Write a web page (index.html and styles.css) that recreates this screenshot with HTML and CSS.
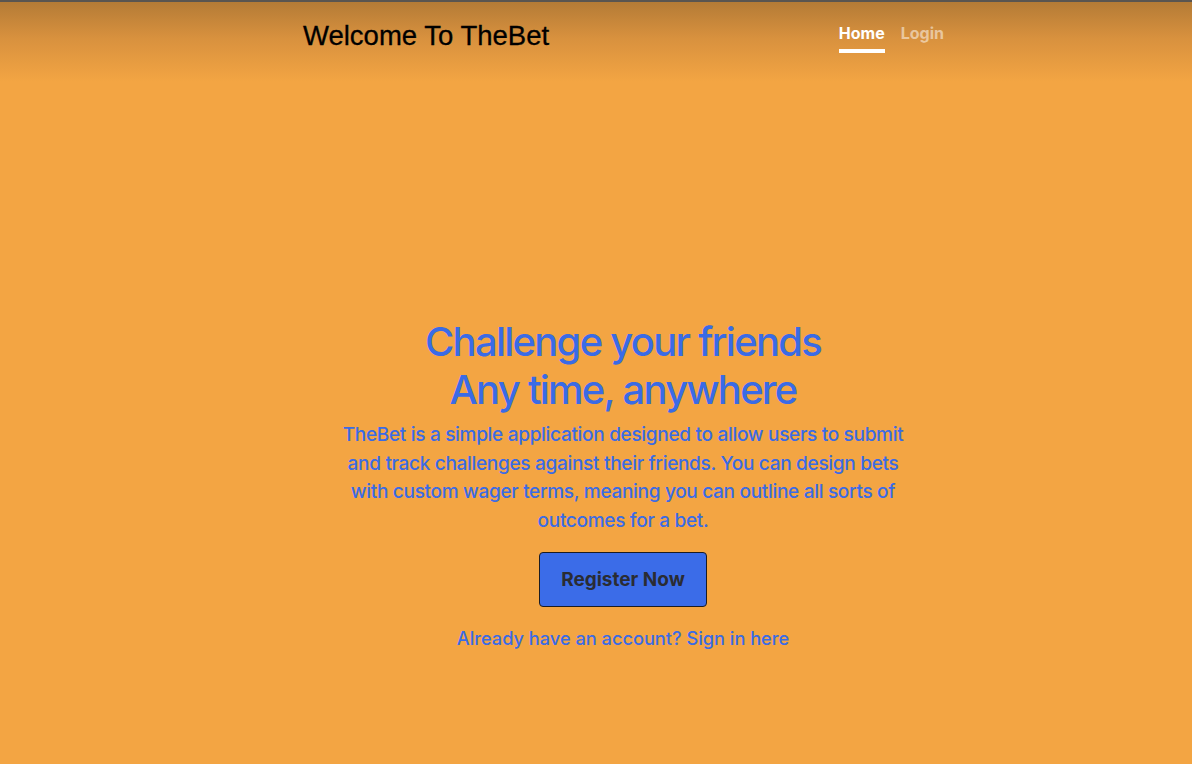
FILE: index.html
```html
<!DOCTYPE html>
<html lang="en">
<head>
<meta charset="utf-8">
<title>TheBet</title>
<link rel="stylesheet" href="styles.css">
</head>
<body>
<header class="masthead">
  <div class="container masthead-inner">
    <h3 class="brand">Welcome To TheBet</h3>
    <nav class="nav">
      <a class="nav-link active" href="#">Home</a>
      <a class="nav-link" href="#">Login</a>
    </nav>
  </div>
</header>
<main class="container hero">
  <h1 class="heading">Challenge your friends<br>Any time, anywhere</h1>
  <p class="lead">TheBet is a simple application designed to allow users to submit and track challenges against their friends. You can design bets with custom wager terms, meaning you can outline all sorts of outcomes for a bet.</p>
  <a class="btn" href="#">Register Now</a>
  <a class="signin" href="#">Already have an account? Sign in here</a>
</main>
</body>
</html>
```
FILE: styles.css
```css
html, body {
  margin: 0;
  height: 100%;
}
body {
  background: #f3a543;
  font-family: Inter, "Noto Sans", sans-serif;
  color: #3a6be6;
  border-top: 2px solid #5a5550;
  box-sizing: border-box;
}
.container {
  width: 640px;
  margin-left: calc(50% - 293px);
}
.masthead {
  height: 80px;
  background: linear-gradient(to bottom, #b47b36 0%, #d8913e 45%, #f3a543 100%);
}
.masthead-inner {
  display: flex;
  justify-content: space-between;
  align-items: flex-start;
}
.brand {
  margin: 18px 0 0 0;
  font-family: "Liberation Sans", Arial, sans-serif;
  font-size: 27.5px;
  font-weight: 400;
  color: #000;
  -webkit-text-stroke: 0.3px #000;
}
.nav {
  display: flex;
  gap: 16px;
  margin-top: 18px;
  margin-right: -1px;
}
.nav-link {
  font-size: 16px;
  font-weight: 700;
  color: rgba(255,255,255,0.5);
  text-decoration: none;
  padding: 2px 0 5px;
  border-bottom: 4px solid transparent;
  line-height: 22px;
}
.nav-link.active {
  color: #fff;
  border-bottom-color: #fff;
}
.hero {
  display: flex;
  flex-direction: column;
  align-items: center;
  text-align: center;
  padding-top: 236px;
}
.heading {
  margin: 0;
  font-size: 40px;
  font-weight: 500;
  line-height: 48px;
  letter-spacing: -1.75px;
}
.lead {
  margin: 7px 0 0;
  font-size: 19px;
  font-weight: 500;
  line-height: 28.7px;
  letter-spacing: -0.3px;
  width: 580px;
}
.btn {
  margin-top: 16px;
  width: 166px;
  height: 53px;
  display: flex;
  align-items: center;
  justify-content: center;
  background: #3b6ce8;
  border: 1px solid #1c1c22;
  border-radius: 4px;
  color: #2a2c33;
  font-size: 19px;
  font-weight: 700;
  text-decoration: none;
}
.signin {
  margin-top: 18px;
  font-size: 18.2px;
  font-weight: 500;
  color: #3a6be6;
  text-decoration: none;
  line-height: 26px;
}
```
